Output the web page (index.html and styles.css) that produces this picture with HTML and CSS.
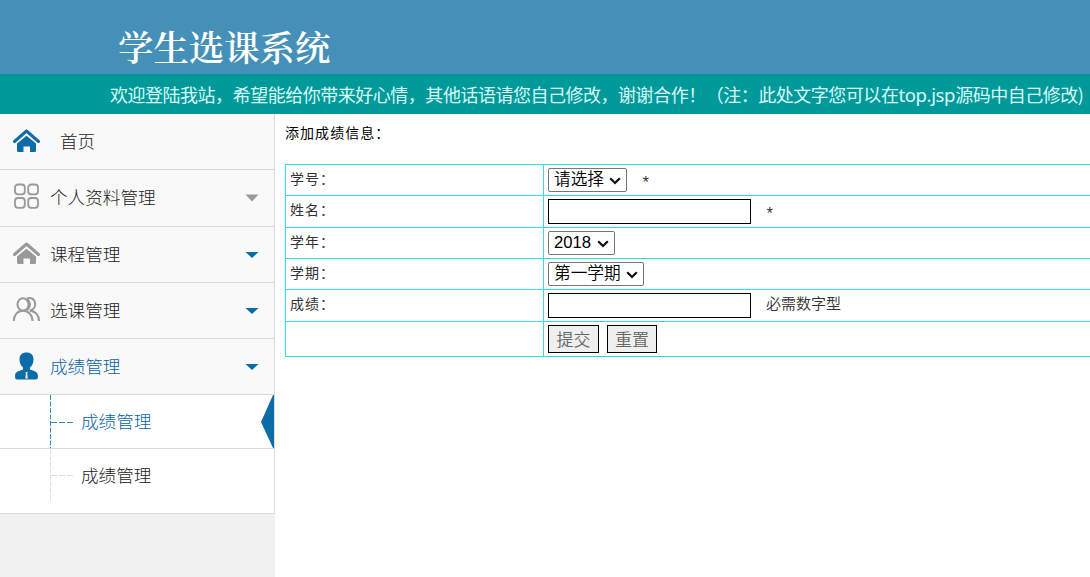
FILE: index.html
```html
<!DOCTYPE html>
<html lang="zh-CN">
<head>
<meta charset="utf-8">
<title>学生选课系统</title>
<link rel="stylesheet" href="styles.css">
</head>
<body>
<header class="banner"><h1 class="title">学生选课系统</h1></header>
<div class="notice"><span class="notice-text">欢迎登陆我站，希望能给你带来好心情，其他话语请您自己修改，谢谢合作！（注：此处文字您可以在<span class="latin">top.jsp</span>源码中自己修改)</span></div>
<div class="body">
  <nav class="sidebar">
    <div class="item home">
      <svg class="icon blue" viewBox="0 0 28 28"><path d="M2.500 14.500 14.500 4 26.500 14.500" fill="none" stroke="currentColor" stroke-width="3" stroke-linecap="round" stroke-linejoin="round"/><path d="M5 16.500 14.500 8.700 24 16.500V23.500Q24 25 22.500 25H18V19.500H11.500V25H6.500Q5 25 5 23.500Z" fill="currentColor"/></svg>
      <span class="label">首页</span>
    </div>
    <div class="item tall">
      <svg class="icon gray" viewBox="0 0 28 28"><g fill="none" stroke="currentColor" stroke-width="1.800"><rect x="3" y="1.500" width="9.800" height="9.800" rx="3"/><rect x="16.200" y="1.500" width="9.800" height="9.800" rx="3"/><rect x="3" y="15" width="9.800" height="9.800" rx="3"/><rect x="16.200" y="15" width="9.800" height="9.800" rx="3"/></g></svg>
      <span class="label">个人资料管理</span>
      <svg class="arrow gray" viewBox="0 0 14 8"><path d="M.5.500H13.500L7 7.500Z" fill="currentColor"/></svg>
    </div>
    <div class="item">
      <svg class="icon gray" viewBox="0 0 28 28"><path d="M2.500 14.500 14.500 4 26.500 14.500" fill="none" stroke="currentColor" stroke-width="3" stroke-linecap="round" stroke-linejoin="round"/><path d="M5 16.500 14.500 8.700 24 16.500V22.500Q24 24 22.500 24H18V18.500H11.500V24H6.500Q5 24 5 22.500Z" fill="currentColor"/></svg>
      <span class="label">课程管理</span>
      <svg class="arrow blue" viewBox="0 0 14 8"><path d="M.5 1H13.500L7 7Z" fill="currentColor"/></svg>
    </div>
    <div class="item">
      <svg class="icon gray" viewBox="0 0 28 28"><g fill="none" stroke="currentColor" stroke-width="2"><ellipse cx="11" cy="8.500" rx="5.500" ry="6.200"/><path d="M1.800 25C1.800 19 5.500 14.800 11 14.800S20.500 19 20.500 25"/><path d="M14.800 2.600C20 .5 23.500 4 23.100 9C22.800 12.200 20.800 14 17.700 14.500C23.500 15.500 27 19 27 25M14.800 3C19 6 18.800 11 15.100 14.300"/></g></svg>
      <span class="label">选课管理</span>
      <svg class="arrow blue" viewBox="0 0 14 8"><path d="M.5 1H13.500L7 7Z" fill="currentColor"/></svg>
    </div>
    <div class="item active">
      <svg class="icon blue" viewBox="0 0 28 28"><path d="M14.500.500C19 .5 21.500 3.100 21.500 7.500C21.500 11.500 20 13.500 18 15.500V17.500C21.500 19 25.900 19.500 25.900 23.500V25.500Q25.900 27.500 22.500 27.500H6.500Q3.100 27.500 3.100 25.500V23.500C3.100 19.500 7.500 19 11 17.500V15.500C9 13.500 7.500 11.500 7.500 7.500C7.500 3.100 10 .5 14.500.500Z" fill="currentColor"/><path d="M13.500 20H15.700L15.300 22 15.900 26.500H13.200L13.900 22Z" fill="#d9ecf5"/></svg>
      <span class="label">成绩管理</span>
      <svg class="arrow blue" viewBox="0 0 14 8"><path d="M.5 1H13.500L7 7Z" fill="currentColor"/></svg>
    </div>
    <div class="sub current">
      <svg class="branch" viewBox="0 0 24 53"><path d="M1.500 0V53" stroke-dasharray="5 1.500"/><path d="M2 27.500H24" stroke-dasharray="6 2"/></svg>
      <span class="label">成绩管理</span>
      <svg class="marker" viewBox="0 0 13 53"><path d="M13 0V53H12L0 27 12 0Z" fill="currentColor"/></svg>
    </div>
    <div class="sub last">
      <svg class="branch" viewBox="0 0 24 53"><path d="M1.500 0V53" stroke-dasharray="5 1.500"/><path d="M2 26.500H24" stroke-dasharray="6 2"/></svg>
      <span class="label">成绩管理</span>
    </div>
  </nav>
  <main class="content">
    <div class="caption">添加成绩信息：</div>
    <form class="table">
      <div class="row r31"><div class="name">学号：</div><div class="field"><div class="picker"><select class="select w79"><option>请选择</option></select><svg class="chevron" viewBox="0 0 12 8"><path d="M1.200 1.200 6 6 10.800 1.200"/></svg></div><span class="note star">*</span></div></div>
      <div class="row r32"><div class="name">姓名：</div><div class="field"><input class="input" type="text"><span class="note star">*</span></div></div>
      <div class="row r31"><div class="name">学年：</div><div class="field"><div class="picker"><select class="select w67"><option>2018</option></select><svg class="chevron" viewBox="0 0 12 8"><path d="M1.200 1.200 6 6 10.800 1.200"/></svg></div></div></div>
      <div class="row r31"><div class="name">学期：</div><div class="field"><div class="picker"><select class="select w96"><option>第一学期</option></select><svg class="chevron" viewBox="0 0 12 8"><path d="M1.200 1.200 6 6 10.800 1.200"/></svg></div></div></div>
      <div class="row r32"><div class="name">成绩：</div><div class="field"><input class="input" type="text"><span class="note">必需数字型</span></div></div>
      <div class="row r35"><div class="name"></div><div class="field"><button class="button submit" type="button">提交</button><button class="button" type="button">重置</button></div></div>
    </form>
  </main>
</div>
</body>
</html>
```
FILE: styles.css
```css
* { box-sizing: border-box; }
body {
  margin: 0;
  height: 577px;
  overflow: hidden;
  background: #fff;
  font-family: "Liberation Sans", "Noto Sans CJK SC", sans-serif;
}
.banner { height: 74px; padding: 19px 0 0 118px; background: #4490b8; }
.title {
  margin: 0;
  font: 600 35.400px/54px "Noto Serif CJK SC", "Noto Sans CJK SC", serif;
  color: #fff;
  white-space: nowrap;
}
.notice { height: 40px; padding-left: 110px; background: #099; overflow: hidden; }
.notice-text {
  display: block;
  font: 400 18px/40px "Noto Sans CJK SC", sans-serif;
  letter-spacing: -0.480px;
  color: #d8fafa;
  white-space: nowrap;
}
.latin { font-family: "Noto Sans", sans-serif; font-size: 18.600px; letter-spacing: -0.400px; }
.body { display: flex; height: 463px; }
.sidebar { width: 275px; flex: none; background: #f1f1f1; }
.item, .sub {
  display: flex;
  align-items: center;
  border-right: 1px solid #d9d9d9;
  border-bottom: 1px solid #d9d9d9;
}
.item { height: 56px; padding: 0 15px 1px 12px; background: #f9f9f9; }
.item.tall { height: 57px; padding-bottom: 2px; }
.icon { width: 28px; height: 28px; flex: none; }
.blue { color: #0b6ca8; }
.gray { color: #999; }
.label {
  font: 300 17.600px/30px "Noto Sans CJK SC", sans-serif;
  color: #222;
  white-space: nowrap;
}
.item .label { flex: 1; padding-left: 10px; }
.item.home .label { padding-left: 20px; }
.arrow { width: 14px; height: 8px; margin-top: 2px; }
.active .label, .current .label { color: #0b62a5; }
.sub { height: 54px; padding-left: 49px; background: #fff; }
.sub.last { height: 65px; padding-bottom: 11px; }
.branch { width: 24px; height: 53px; flex: none; fill: none; stroke: #ddd; }
.current .branch { stroke: #3c89b9; }
.sub .label { flex: 1; padding: 0 0 2px 8px; }
.marker { width: 13px; height: 53px; color: #0b6ca8; }
.content {
  flex: 1;
  min-width: 0;
  padding-left: 10px;
  overflow: hidden;
  font: 15px/20px "Liberation Mono", "Noto Sans CJK SC", monospace;
}
.caption { height: 50px; padding-top: 10px; font-size: 14px; letter-spacing: 1.050px; color: #000; }
.table { width: 820px; margin: 0; border-top: 1px solid #30e0e0; border-left: 1px solid #30e0e0; }
.row { display: flex; border-bottom: 1px solid #30e0e0; }
.r31 { height: 31px; }
.r32 { height: 32px; }
.r35 { height: 35px; }
.name {
  width: 258px;
  padding: 5px 0 0 4px;
  border-right: 1px solid #30e0e0;
  font-size: 14px;
  letter-spacing: 1.050px;
  color: #333;
}
.field { display: flex; align-items: center; padding-left: 4px; }
.picker { position: relative; display: flex; }
.select {
  appearance: none;
  height: 24px;
  margin: 0;
  padding: 0 5px;
  border: 1px solid #767676;
  border-radius: 2px;
  background: #fff;
  color: #000;
  font: 350 16.670px/20px "Liberation Sans", "Noto Sans CJK SC", sans-serif;
}
.chevron {
  position: absolute;
  right: 6px;
  top: 9px;
  width: 12px;
  height: 8px;
  fill: none;
  stroke: #111;
  stroke-width: 2.200;
  pointer-events: none;
}
.w79 { width: 79px; }
.w67 { width: 67px; }
.w96 { width: 96px; }
.input { width: 203px; height: 25px; border: 1px solid #000; background: #fff; }
.note { padding-left: 15px; color: #333; font-weight: 350; }
.star { padding: 7px 0 0 14px; font-size: 16px; }
.button {
  width: 50px;
  height: 28px;
  padding: 0;
  border: 1px solid #000;
  background: #efefef;
  color: #666;
  font: 350 17px/24px "Noto Sans CJK SC", sans-serif;
}
.button.submit { width: 51px; margin-right: 8px; }
```
